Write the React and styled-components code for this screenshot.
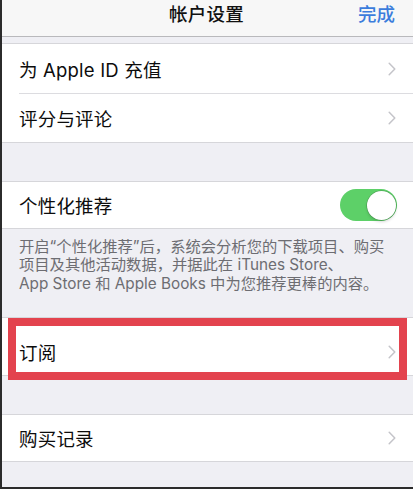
import React from "react";
import styled, { createGlobalStyle } from "styled-components";

const Global = createGlobalStyle`
  html, body { margin: 0; padding: 0; background: #efeff4; }
  body { font-family: "Inter", "Noto Sans CJK SC", sans-serif; -webkit-font-smoothing: antialiased; }
  * { box-sizing: border-box; }
`;

const Screen = styled.div`
  width: 413px;
  height: 489px;
  overflow: hidden;
  background: #efeff4;
  border-left: 2px solid #2b2b2b;
  border-bottom: 2px solid #2b2b2b;
  display: flex;
  flex-direction: column;
`;

const NavBar = styled.div`
  height: 37px;
  flex-shrink: 0;
  background: #f7f7f7;
  border-bottom: 1px solid #b9b9bc;
  display: grid;
  grid-template-columns: 1fr auto 1fr;
  align-items: start;
  padding: 3px 18px 0 16px;
`;

const NavTitle = styled.div`
  grid-column: 2;
  font-size: 18.5px;
  line-height: 22px;
  font-weight: 500;
  color: #111;
  letter-spacing: 0.3px;
`;

const NavAction = styled.div`
  grid-column: 3;
  justify-self: end;
  font-size: 18.5px;
  line-height: 22px;
  font-weight: 500;
  color: #3c7ddc;
`;

const Gap = styled.div`
  height: ${(p) => p.$h}px;
  flex-shrink: 0;
`;

const Group = styled.div`
  background: #fff;
  border-top: 1px solid #d6d6da;
  border-bottom: 1px solid #d6d6da;
  flex-shrink: 0;
  position: relative;
`;

const Row = styled.div`
  height: ${(p) => p.$h || 49}px;
  padding: ${(p) => p.$pt || 0}px 17px 0 17px;
  display: flex;
  align-items: center;
  justify-content: space-between;
  position: relative;
  &::after {
    content: "";
    display: ${(p) => (p.$sep ? "block" : "none")};
    position: absolute;
    left: 17px;
    right: 0;
    bottom: 0;
    height: 1px;
    background: #dcdce0;
  }
`;

const Label = styled.span`
  font-size: 18.5px;
  color: #0c0c0c;
  letter-spacing: 0.2px;
`;

const Footer = styled.div`
  padding: 9px 17px 0 17px;
  font-size: 15.3px;
  line-height: 18.3px;
  color: #6d6d72;
  height: ${(p) => p.$h}px;
  flex-shrink: 0;
  white-space: nowrap;
`;

const Toggle = styled.div`
  width: 57px;
  height: 32px;
  border-radius: 16px;
  background: #5dd068;
  position: relative;
  margin-right: -1px;
  &::after {
    content: "";
    position: absolute;
    right: 1.5px;
    top: 1.5px;
    width: 29px;
    height: 29px;
    border-radius: 50%;
    background: #fff;
    box-shadow: 0 0 0 0.5px rgba(0, 0, 0, 0.25), 0 2px 3px rgba(0, 0, 0, 0.15);
  }
`;

const Highlight = styled.div`
  position: absolute;
  left: 6px;
  right: 6px;
  top: 0px;
  bottom: -5px;
  border: 8.5px solid #e3434e;
  pointer-events: none;
`;

const Chevron = () => (
  <svg width="8" height="14" viewBox="0 0 8 14">
    <path d="M1.2 1.2 L6.8 7 L1.2 12.8" fill="none" stroke="#c4c4c9" strokeWidth="1.5" strokeLinecap="round" strokeLinejoin="round" />
  </svg>
);

export default function App() {
  return (
    <>
      <Global />
      <Screen>
        <NavBar>
          <NavTitle>帐户设置</NavTitle>
          <NavAction>完成</NavAction>
        </NavBar>
        <Gap $h={6} />
        <Group>
          <Row $h={50} $sep>
            <Label>为 Apple ID 充值</Label>
            <Chevron />
          </Row>
          <Row $h={48}>
            <Label>评分与评论</Label>
            <Chevron />
          </Row>
        </Group>
        <Gap $h={38} />
        <Group>
          <Row $h={46}>
            <Label>个性化推荐</Label>
            <Toggle />
          </Row>
        </Group>
        <Footer $h={88}>
          开启“个性化推荐”后，系统会分析您的下载项目、购买
          <br />
          项目及其他活动数据，并据此在 iTunes Store、
          <br />
          App Store 和 Apple Books 中为您推荐更棒的内容。
        </Footer>
        <Group>
          <Row $h={57} $pt={10}>
            <Label>订阅</Label>
            <Chevron />
          </Row>
          <Highlight />
        </Group>
        <Gap $h={38} />
        <Group>
          <Row $h={46}>
            <Label>购买记录</Label>
            <Chevron />
          </Row>
        </Group>
      </Screen>
    </>
  );
}
